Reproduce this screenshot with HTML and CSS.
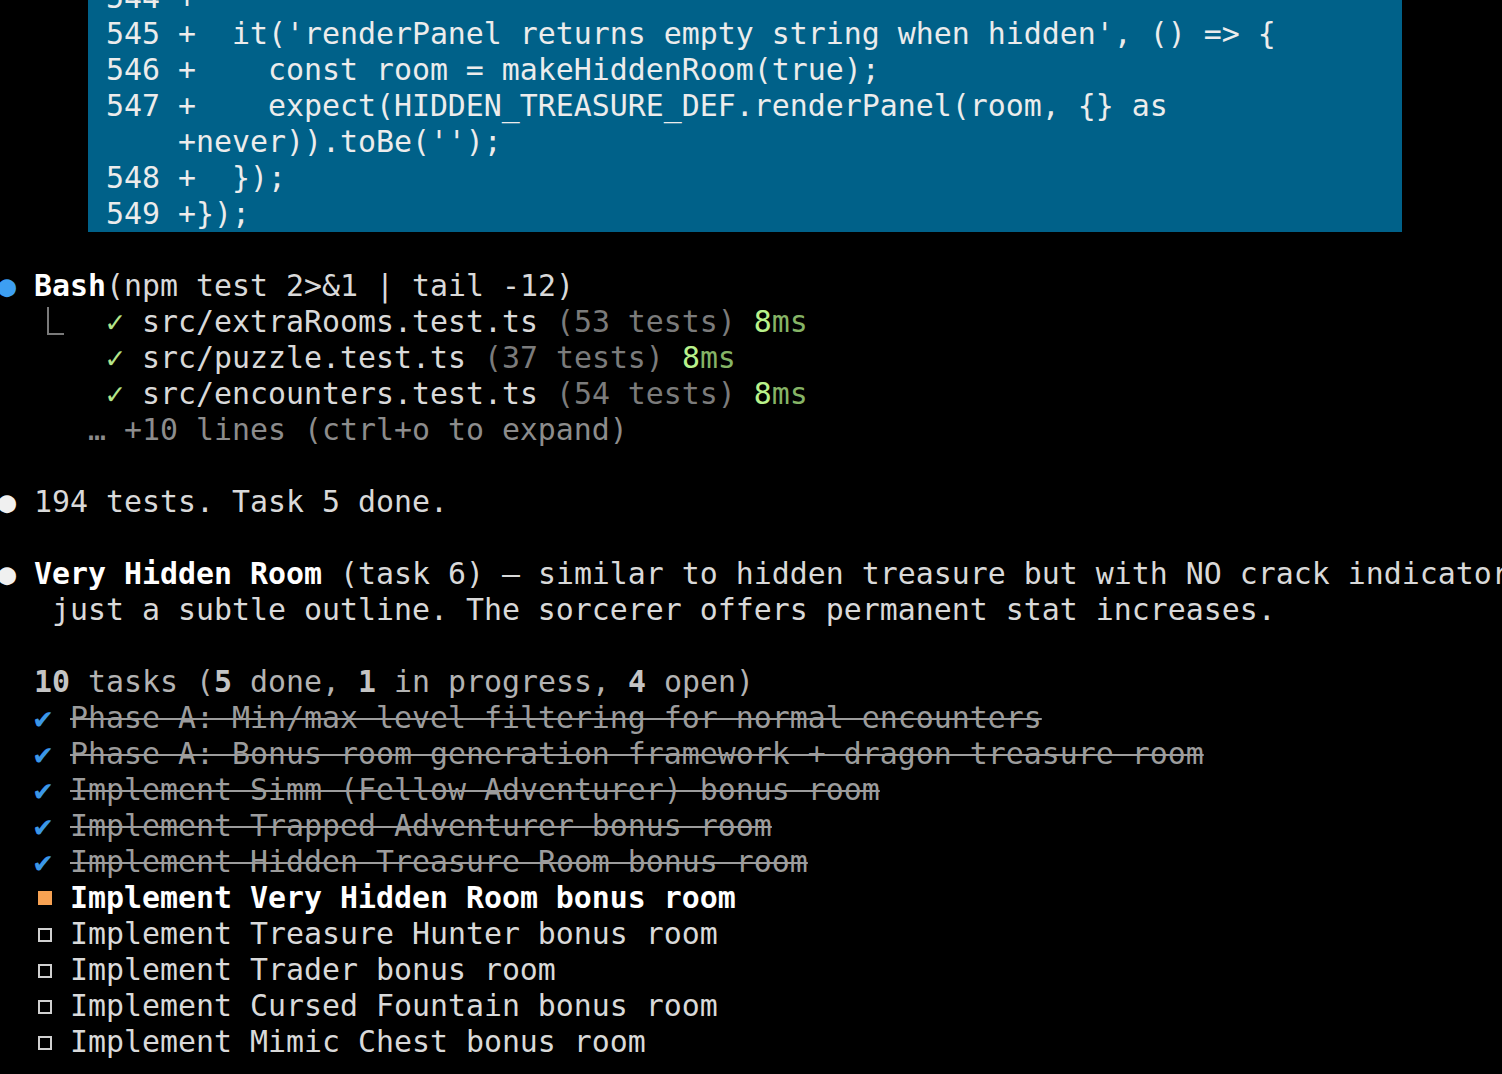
FILE: index.html
```html
<!DOCTYPE html>
<html>
<head>
<meta charset="utf-8">
<link rel="stylesheet" href="styles.css">
</head>
<body>
<div class="term">
  <div class="diff">
    <div class="row">544 +</div>
    <div class="row">545 +  it('renderPanel returns empty string when hidden', () =&gt; {</div>
    <div class="row">546 +    const room = makeHiddenRoom(true);</div>
    <div class="row">547 +    expect(HIDDEN_TREASURE_DEF.renderPanel(room, {} as</div>
    <div class="row">    +never)).toBe('');</div>
    <div class="row">548 +  });</div>
    <div class="row">549 +});</div>
  </div>
  <div class="row"> </div>
  <div class="row"><span class="dot-blue">●</span> <span class="bold">Bash</span>(npm test 2&gt;&amp;1 | tail -12)</div>
  <div class="row">  <span class="elbow"></span>   <span class="ok">✓</span> src/extraRooms.test.ts <span class="dim">(53 tests)</span> <span class="ms-num">8</span><span class="ms">ms</span></div>
  <div class="row">      <span class="ok">✓</span> src/puzzle.test.ts <span class="dim">(37 tests)</span> <span class="ms-num">8</span><span class="ms">ms</span></div>
  <div class="row">      <span class="ok">✓</span> src/encounters.test.ts <span class="dim">(54 tests)</span> <span class="ms-num">8</span><span class="ms">ms</span></div>
  <div class="row dim2">     … +10 lines (ctrl+o to expand)</div>
  <div class="row"> </div>
  <div class="row"><span class="dot-white">●</span> 194 tests. Task 5 done.</div>
  <div class="row"> </div>
  <div class="row"><span class="dot-white">●</span> <span class="bold">Very Hidden Room</span> (task 6) — similar to hidden treasure but with NO crack indicator,</div>
  <div class="row">   just a subtle outline. The sorcerer offers permanent stat increases.</div>
  <div class="row"> </div>
  <div class="row tasks-head">  <b>10</b> tasks (<b>5</b> done, <b>1</b> in progress, <b>4</b> open)</div>
  <div class="row">  <span class="done-mark">✔</span> <span class="struck">Phase A: Min/max level filtering for normal encounters</span></div>
  <div class="row">  <span class="done-mark">✔</span> <span class="struck">Phase A: Bonus room generation framework + dragon treasure room</span></div>
  <div class="row">  <span class="done-mark">✔</span> <span class="struck">Implement Simm (Fellow Adventurer) bonus room</span></div>
  <div class="row">  <span class="done-mark">✔</span> <span class="struck">Implement Trapped Adventurer bonus room</span></div>
  <div class="row">  <span class="done-mark">✔</span> <span class="struck">Implement Hidden Treasure Room bonus room</span></div>
  <div class="row">  <span class="prog-mark"></span> <span class="bold">Implement Very Hidden Room bonus room</span></div>
  <div class="row">  <span class="open-mark"></span> Implement Treasure Hunter bonus room</div>
  <div class="row">  <span class="open-mark"></span> Implement Trader bonus room</div>
  <div class="row">  <span class="open-mark"></span> Implement Cursed Fountain bonus room</div>
  <div class="row">  <span class="open-mark"></span> Implement Mimic Chest bonus room</div>
</div>
</body>
</html>
```

FILE: styles.css
```css
html, body {
  margin: 0;
  padding: 0;
  background: #000;
  overflow: hidden;
}

.term {
  margin-top: -21px;
  margin-left: -2px;
  font-family: "DejaVu Sans Mono", "Liberation Mono", monospace;
  font-size: 29.9px;
  line-height: 36px;
  color: #d9d9d9;
  width: 1700px;
}

.row {
  white-space: pre;
  height: 36px;
}

.diff {
  margin-top: -1px;
  margin-left: 5ch;
  width: 73ch;
  padding-left: 1ch;
  padding-top: 1px;
  box-sizing: border-box;
  background: #006189;
  color: #ececec;
}

.bold {
  font-weight: bold;
  color: #ffffff;
}

.dot-blue {
  color: #3d9ff2;
}

.dot-white {
  color: #f0f0f0;
}

.ok {
  color: #b4e58a;
}

.dim {
  color: #7b7b7b;
}

.dim2 {
  color: #8c8c8c;
}

.ms-num {
  color: #b9f28c;
}

.ms {
  color: #86b466;
}

.elbow {
  display: inline-block;
  width: 1ch;
  height: 36px;
  vertical-align: top;
  position: relative;
}

.elbow::before {
  content: "";
  position: absolute;
  left: 13px;
  top: 3px;
  width: 15px;
  height: 26px;
  border-left: 2px solid #7a7a7a;
  border-bottom: 2px solid #7a7a7a;
}

.tasks-head {
  color: #b3b3b3;
}

.tasks-head b {
  color: #c4c4c4;
}

.done-mark {
  color: #3b97e8;
}

.struck {
  color: #9c9c9c;
  text-decoration: line-through;
  text-decoration-color: #9c9c9c;
  text-decoration-thickness: 2px;
}

.prog-mark,
.open-mark {
  display: inline-block;
  width: 1ch;
  height: 36px;
  vertical-align: top;
  position: relative;
}

.prog-mark::before {
  content: "";
  position: absolute;
  left: 4px;
  top: 11px;
  width: 14px;
  height: 14px;
  background: #f7a253;
}

.open-mark::before {
  content: "";
  position: absolute;
  left: 4px;
  top: 12px;
  width: 10px;
  height: 10px;
  border: 2px solid #d0d0d0;
}
```
